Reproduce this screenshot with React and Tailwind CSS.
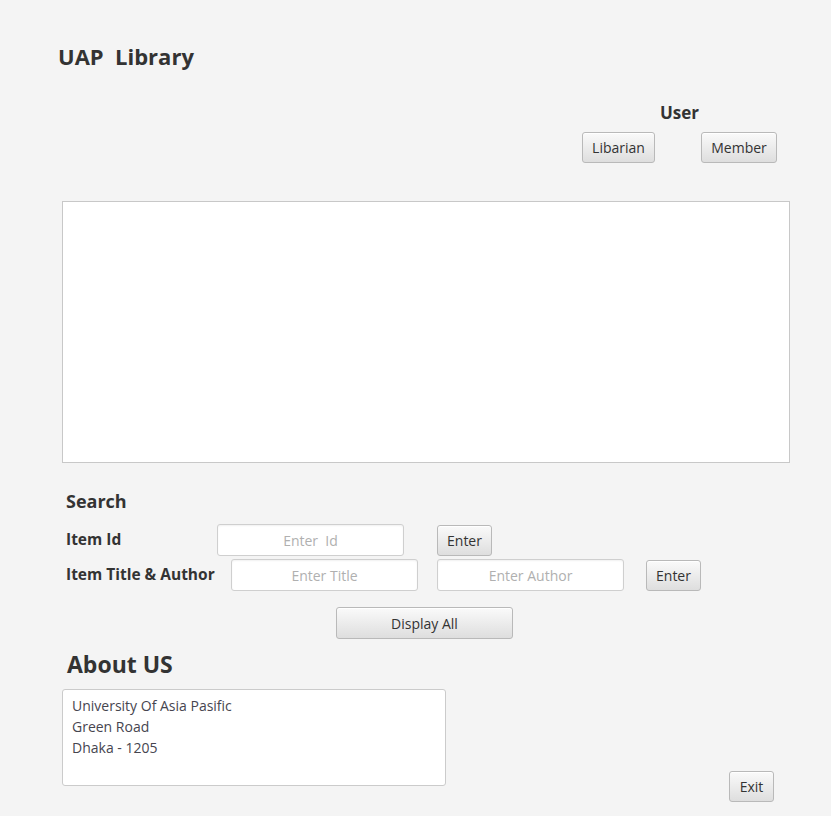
import React from 'react';

const font = { fontFamily: '"Open Sans", "Noto Sans", sans-serif' };

const Btn = ({ children, className = '' }) => (
  <button
    type="button"
    className={`h-[31px] rounded-[3px] border border-[#b9b9b9] bg-gradient-to-b from-[#fafafa] to-[#dedede] text-[14px] text-[#333] shadow-[inset_0_1px_0_#ffffff] ${className}`}
  >
    {children}
  </button>
);

const Field = ({ placeholder, className = '' }) => (
  <input
    type="text"
    placeholder={placeholder}
    className={`h-[32px] w-[187px] rounded-[3px] border border-[#cfcfcf] bg-white text-center text-[14px] text-[#333] placeholder:text-[#b0b0b0] shadow-[inset_0_1px_2px_rgba(0,0,0,0.06)] outline-none ${className}`}
  />
);

export default function App() {
  return (
    <div className="w-[831px] h-[816px] bg-[#f4f4f4] text-[#333] flex flex-col" style={font}>
      {/* Title */}
      <h1 className="pl-[58px] pt-[40px] text-[22px] leading-[32px] font-bold whitespace-pre">UAP  Library</h1>

      {/* User switch */}
      <div className="self-end mr-[54px] mt-[30px] flex flex-col items-center">
        <div className="text-[17px] leading-[22px] font-bold">User</div>
        <div className="mt-[8px] flex gap-[46px]">
          <Btn className="w-[73px]">Libarian</Btn>
          <Btn className="w-[76px]">Member</Btn>
        </div>
      </div>

      {/* Result table area */}
      <div className="ml-[62px] mt-[38px] w-[728px] h-[262px] bg-white border border-[#c8c8c8]"></div>

      {/* Search */}
      <div className="pl-[66px] mt-[25px]">
        <div className="text-[18px] leading-[26px] font-bold">Search</div>
        <div className="mt-[10px] flex items-center">
          <div className="w-[151px] text-[15.5px] font-bold">Item Id</div>
          <Field placeholder="Enter  Id" />
          <Btn className="ml-[33px] w-[55px]">Enter</Btn>
        </div>
        <div className="mt-[3px] flex items-center">
          <div className="w-[165px] text-[15.5px] font-bold whitespace-nowrap">Item Title &amp; Author</div>
          <Field placeholder="Enter Title" />
          <Field placeholder="Enter Author" className="ml-[19px]" />
          <Btn className="ml-[22px] w-[55px]">Enter</Btn>
        </div>
        <div className="mt-[16px] pl-[270px]">
          <Btn className="w-[177px] h-[32px]">Display All</Btn>
        </div>
      </div>

      {/* About */}
      <div className="pl-[67px] mt-[10px] text-[23px] leading-[30px] font-bold">About US</div>
      <div className="mt-[10px] flex items-end">
        <div className="ml-[62px] w-[384px] h-[97px] bg-white border border-[#cbcbcb] rounded-[3px] px-[9px] pt-[5px] text-[14px] leading-[21px] text-[#46454f]">
          <div>University Of Asia Pasific</div>
          <div>Green Road</div>
          <div>Dhaka - 1205</div>
        </div>
        <Btn className="ml-[283px] mb-[-16px] w-[45px]">Exit</Btn>
      </div>
    </div>
  );
}
